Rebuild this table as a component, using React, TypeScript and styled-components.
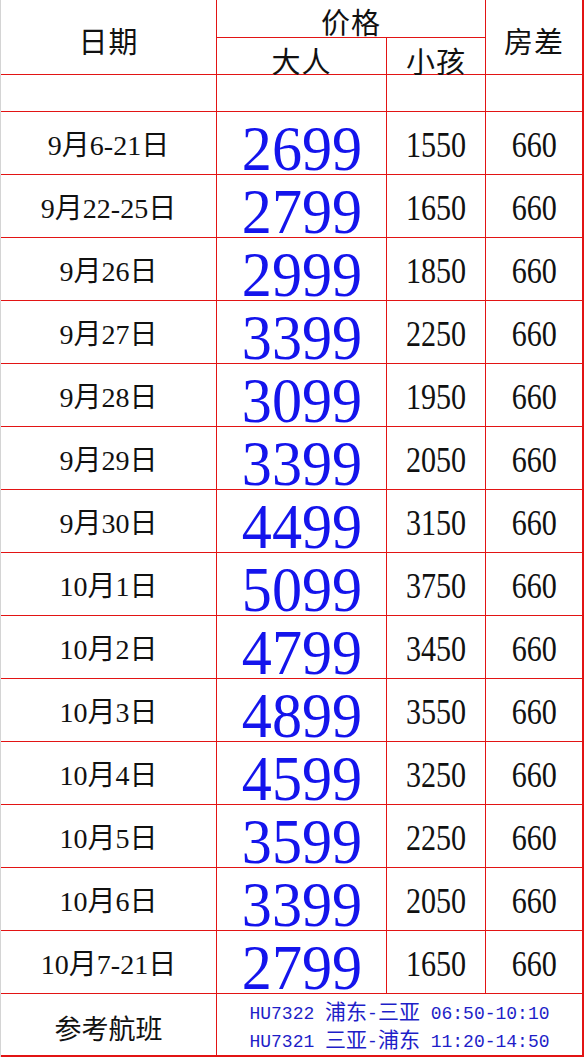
import * as React from "react";
import styled, { createGlobalStyle } from "styled-components";

const GlobalStyle = createGlobalStyle`
  html, body {
    margin: 0;
    padding: 0;
    background: #ffffff;
  }
`;

type Row = { date: string; adult: string; child: string; room: string };

const rows: Row[] = [
  { date: "9月6-21日", adult: "2699", child: "1550", room: "660" },
  { date: "9月22-25日", adult: "2799", child: "1650", room: "660" },
  { date: "9月26日", adult: "2999", child: "1850", room: "660" },
  { date: "9月27日", adult: "3399", child: "2250", room: "660" },
  { date: "9月28日", adult: "3099", child: "1950", room: "660" },
  { date: "9月29日", adult: "3399", child: "2050", room: "660" },
  { date: "9月30日", adult: "4499", child: "3150", room: "660" },
  { date: "10月1日", adult: "5099", child: "3750", room: "660" },
  { date: "10月2日", adult: "4799", child: "3450", room: "660" },
  { date: "10月3日", adult: "4899", child: "3550", room: "660" },
  { date: "10月4日", adult: "4599", child: "3250", room: "660" },
  { date: "10月5日", adult: "3599", child: "2250", room: "660" },
  { date: "10月6日", adult: "3399", child: "2050", room: "660" },
  { date: "10月7-21日", adult: "2799", child: "1650", room: "660" },
];

const flights = [
  { no: "HU7322", from: "浦东", to: "三亚", time: "06:50-10:10" },
  { no: "HU7321", from: "三亚", to: "浦东", time: "11:20-14:50" },
];

export default function App() {
  return (
    <>
      <GlobalStyle />
      <Sheet>
        <HeadCell rowSpan2 pad={6}>日期</HeadCell>
        <HeadCell colSpan2 pad={6}>价格</HeadCell>
        <HeadCell rowSpan2 pad={6}>房差</HeadCell>
        <HeadCell pad={8}>大人</HeadCell>
        <HeadCell pad={8}>小孩</HeadCell>

        <Cell />
        <Cell />
        <Cell />
        <Cell />

        {rows.map((r) => (
          <React.Fragment key={r.date}>
            <DateCell>{r.date}</DateCell>
            <Cell pad={11}>
              <BigPrice>{r.adult}</BigPrice>
            </Cell>
            <Cell pad={4}>
              <SmallNum>{r.child}</SmallNum>
            </Cell>
            <Cell pad={4}>
              <SmallNum>{r.room}</SmallNum>
            </Cell>
          </React.Fragment>
        ))}

        <FooterLabel>参考航班</FooterLabel>
        <FlightCell>
          {flights.map((f) => (
            <FlightLine key={f.no}>
              {f.no} <Cjk>{f.from}</Cjk>-<Cjk>{f.to}</Cjk> {f.time}
            </FlightLine>
          ))}
        </FlightCell>
      </Sheet>
    </>
  );
}

const Sheet = styled.div`
  width: 584px;
  box-sizing: border-box;
  display: grid;
  grid-template-columns: 215px 169px 98px 96px;
  grid-template-rows: 37px 36px 36px repeat(14, 62px) 61px;
  gap: 1px;
  background: #e21414;
  border-left: 1px solid #d4d4d4;
  padding: 0 2px 2px 0;
`;

const Cell = styled.div<{ pad?: number }>`
  background: #ffffff;
  display: flex;
  align-items: center;
  justify-content: center;
  box-sizing: border-box;
  padding-top: ${(p) => p.pad ?? 0}px;
  line-height: 1;
  color: #111111;
  font-family: "Liberation Serif", "Noto Sans CJK SC", serif;
`;

const HeadCell = styled(Cell)<{ rowSpan2?: boolean; colSpan2?: boolean }>`
  grid-row: ${(p) => (p.rowSpan2 ? "span 2" : "auto")};
  grid-column: ${(p) => (p.colSpan2 ? "span 2" : "auto")};
  font-family: "Noto Sans CJK SC", sans-serif;
  font-size: 29px;
  letter-spacing: 1px;
`;

const DateCell = styled(Cell)`
  padding-top: 5px;
  font-size: 28px;
`;

const BigPrice = styled.span`
  display: inline-block;
  font-family: "Liberation Serif", serif;
  font-size: 64px;
  line-height: 46px;
  color: #1414ec;
  transform: scaleX(0.94);
`;

const SmallNum = styled.span`
  display: inline-block;
  font-family: "Liberation Serif", serif;
  font-size: 35px;
  color: #111111;
  transform: scaleX(0.86);
`;

const FooterLabel = styled(Cell)`
  padding-top: 5px;
  font-family: "Noto Sans CJK SC", sans-serif;
  font-size: 27px;
`;

const FlightCell = styled(Cell)`
  grid-column: span 3;
  flex-direction: column;
  padding-top: 5px;
  color: #1e1ec8;
`;

const FlightLine = styled.div`
  font-family: "Liberation Mono", monospace;
  font-size: 18px;
  line-height: 26px;
  white-space: pre;
`;

const Cjk = styled.span`
  display: inline-block;
  font-family: "Noto Sans CJK SC", sans-serif;
  font-size: 21px;
  line-height: 22px;
`;
